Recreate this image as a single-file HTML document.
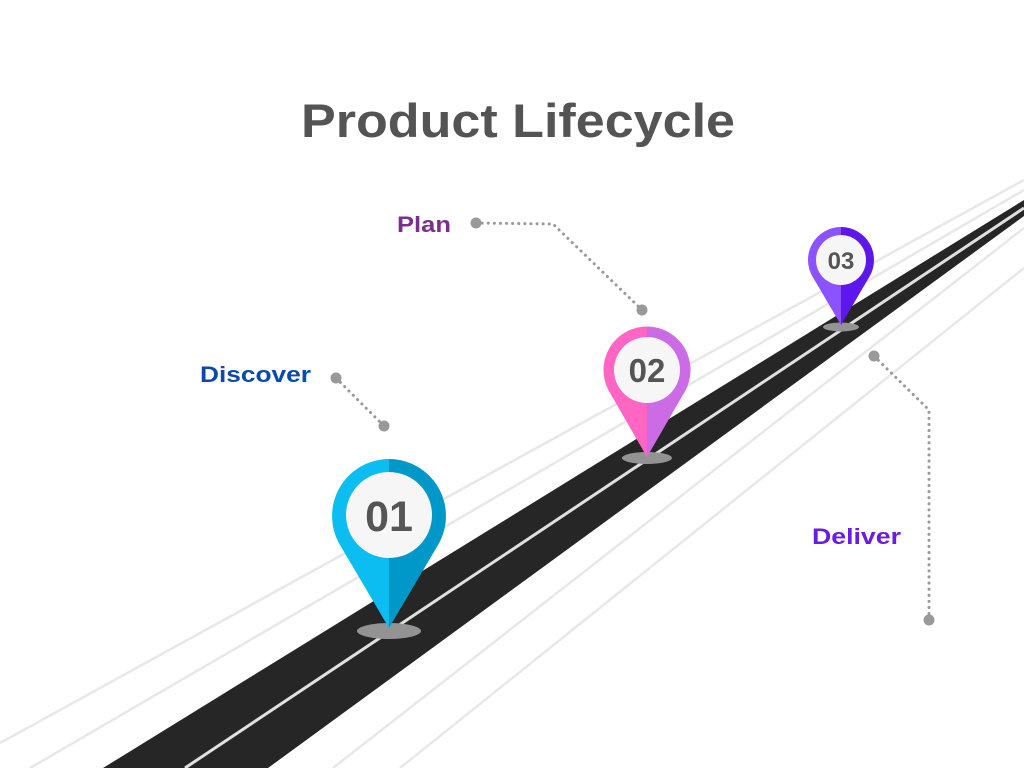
<!DOCTYPE html>
<html><head><meta charset="utf-8"><style>
html,body{margin:0;padding:0;background:#fff;}
svg{display:block;}
text{font-family:"Liberation Sans",sans-serif;font-weight:bold;}
</style></head><body>
<svg width="1024" height="768" viewBox="0 0 1024 768">
<rect width="1024" height="768" fill="#fff"/>
<g stroke="#e8e8e8" stroke-width="2.5" fill="none">
<line x1="0" y1="743" x2="1024" y2="180"/>
<line x1="30" y1="768" x2="1024" y2="190"/>
<line x1="333" y1="768" x2="1024" y2="228"/>
<line x1="400" y1="768" x2="1024" y2="268"/>
</g>
<polygon points="103,768 1024,200 1024,216 268,768" fill="#262626"/>
<line x1="185" y1="768" x2="1024" y2="208" stroke="#e0e0e0" stroke-width="3"/>

<text x="518" y="137" font-size="47" fill="#545454" text-anchor="middle" textLength="434" lengthAdjust="spacingAndGlyphs">Product Lifecycle</text>

<text x="397" y="232" font-size="22" fill="#7b2d92" textLength="54" lengthAdjust="spacingAndGlyphs">Plan</text>
<text x="200" y="382" font-size="22" fill="#0a4aad" textLength="111" lengthAdjust="spacingAndGlyphs">Discover</text>
<text x="812" y="544" font-size="22" fill="#6a1be6" textLength="89" lengthAdjust="spacingAndGlyphs">Deliver</text>

<g stroke="#999" stroke-width="3" stroke-dasharray="0.1 6" stroke-linecap="round" fill="none">
<polyline points="476,223 553,224 642,310"/>
<polyline points="336,378 384,426"/>
<polyline points="874,356 929,410 929,620"/>
</g>
<g fill="#999">
<circle cx="476" cy="223" r="5.5"/><circle cx="642" cy="310" r="5.5"/>
<circle cx="336" cy="378" r="5.5"/><circle cx="384" cy="426" r="5.5"/>
<circle cx="874" cy="356" r="5.5"/><circle cx="929" cy="620" r="5.5"/>
</g>

<ellipse cx="389" cy="631" rx="32" ry="8" fill="#939393"/>
<ellipse cx="647" cy="458" rx="25" ry="6" fill="#939393"/>
<ellipse cx="841" cy="327" rx="18" ry="4.5" fill="#939393"/>

<path d="M389,628 L340,545 A57,57 0 0 1 389,459 Z" fill="#0bbdf0"/>
<path d="M389,628 L389,459 A57,57 0 0 1 438,545 Z" fill="#0097c9"/>
<circle cx="389" cy="515" r="43" fill="#f6f6f6"/>
<text x="389" y="531" font-size="43" fill="#555" text-anchor="middle">01</text>

<path d="M647,457 L609.3,391.7 A43.5,43.5 0 0 1 647,326.5 Z" fill="#ff66c4"/>
<path d="M647,457 L647,326.5 A43.5,43.5 0 0 1 684.7,391.7 Z" fill="#cb6ce6"/>
<circle cx="647" cy="370" r="33" fill="#f6f6f6"/>
<text x="647" y="382" font-size="33" fill="#555" text-anchor="middle">02</text>

<path d="M841,325 L812.6,276.8 A33,33 0 0 1 841,227 Z" fill="#8c52ff"/>
<path d="M841,325 L841,227 A33,33 0 0 1 869.4,276.8 Z" fill="#5e17eb"/>
<circle cx="841" cy="260" r="25" fill="#f6f6f6"/>
<text x="841" y="269" font-size="24" fill="#555" text-anchor="middle">03</text>
</svg>
</body></html>
